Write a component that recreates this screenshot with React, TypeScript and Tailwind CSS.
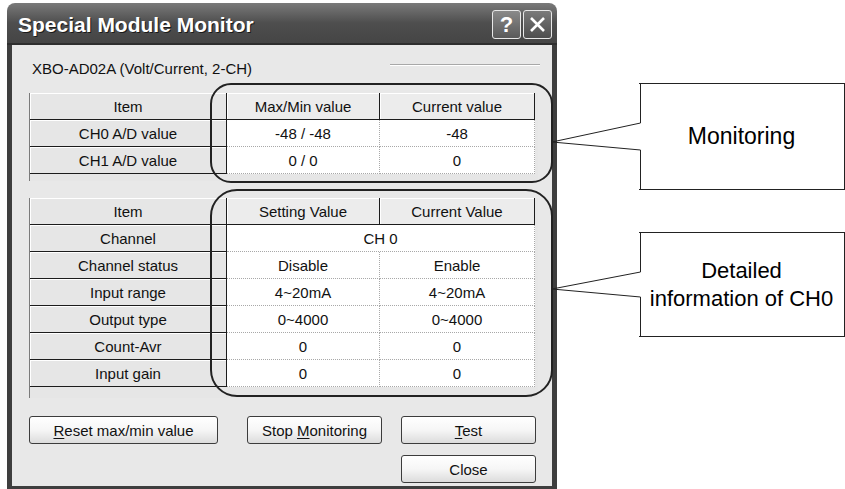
import React from 'react';

type Row = { label: string; a: string; b?: string; span?: boolean };

const monitorRows: Row[] = [
  { label: 'CH0 A/D value', a: '-48 / -48', b: '-48' },
  { label: 'CH1 A/D value', a: '0 / 0', b: '0' },
];

const detailRows: Row[] = [
  { label: 'Channel', a: 'CH 0', span: true },
  { label: 'Channel status', a: 'Disable', b: 'Enable' },
  { label: 'Input range', a: '4~20mA', b: '4~20mA' },
  { label: 'Output type', a: '0~4000', b: '0~4000' },
  { label: 'Count-Avr', a: '0', b: '0' },
  { label: 'Input gain', a: '0', b: '0' },
];

function ItemCell({ children }: { children: React.ReactNode }) {
  return (
    <div className="flex h-full w-[197px] items-center justify-center border-r border-b border-[#1c1c1c] bg-[#e6e6e6] shadow-[inset_1px_1px_0_#ffffff]">
      {children}
    </div>
  );
}

function HeadCell({ children, wide }: { children: React.ReactNode; wide?: boolean }) {
  return (
    <div
      className={`flex h-full items-center justify-center border-r border-b border-[#1c1c1c] bg-[#ececec] shadow-[inset_1px_1px_0_#ffffff] ${
        wide ? 'w-[155px]' : 'w-[153px]'
      }`}
    >
      {children}
    </div>
  );
}

function DataCell({ children, w }: { children: React.ReactNode; w: string }) {
  return (
    <div className={`flex h-full items-center justify-center border-r border-b border-dotted border-[#a8a8a8] bg-white ${w}`}>
      {children}
    </div>
  );
}

function Grid({ head, rows, strip }: { head: [string, string]; rows: Row[]; strip: string }) {
  return (
    <div className="flex w-[509px] flex-col border-l border-[#7a7a7a] bg-[#e6e6e6]">
      <div className="flex h-[27px]">
        <ItemCell>Item</ItemCell>
        <HeadCell>{head[0]}</HeadCell>
        <HeadCell wide>{head[1]}</HeadCell>
      </div>
      {rows.map((r) => (
        <div key={r.label} className="flex h-[27px]">
          <ItemCell>{r.label}</ItemCell>
          {r.span ? (
            <DataCell w="w-[308px]">{r.a}</DataCell>
          ) : (
            <>
              <DataCell w="w-[153px]">{r.a}</DataCell>
              <DataCell w="w-[155px]">{r.b}</DataCell>
            </>
          )}
        </div>
      ))}
      <div className={strip} />
    </div>
  );
}

function Btn({ children, w }: { children: React.ReactNode; w: string }) {
  return (
    <div
      className={`flex h-[28px] items-center justify-center rounded-[3px] border border-[#3c3c3c] bg-gradient-to-b from-white via-[#f6f6f6] to-[#dcdcdc] ${w}`}
    >
      {children}
    </div>
  );
}

export default function App() {
  return (
    <div className="relative flex h-[489px] w-[845px] overflow-hidden bg-white font-['Liberation_Sans',Arial,sans-serif] text-[15px] leading-none text-[#111]">
      {/* dialog */}
      <div className="mt-[3px] ml-[7px] flex h-[486px] w-[551px] flex-col">
        <div className="flex h-[42px] items-start justify-between rounded-t-[8px] border-b-2 border-[#2e2e2e] bg-gradient-to-b from-[#7a7a7a] via-[#4e4e4e] to-[#454545] pl-[11px] pr-[5px]">
          <span className="mt-[11px] text-[21px] font-bold text-white [text-shadow:1px_1px_0_#1a1a1a]">
            Special Module Monitor
          </span>
          <div className="mt-[7px] flex gap-[2px]">
            <div className="flex h-[29px] w-[29px] items-center justify-center rounded-[3px] border border-[#e8e8e8] bg-gradient-to-b from-[#8a8a8a] to-[#5a5a5a] text-[22px] font-bold text-white">
              ?
            </div>
            <div className="flex h-[29px] w-[29px] items-center justify-center rounded-[3px] border border-[#e8e8e8] bg-gradient-to-b from-[#7a7a7a] to-[#4e4e4e]">
              <svg width="17" height="17" viewBox="0 0 17 17">
                <path d="M2 2 L15 15 M15 2 L2 15" stroke="#fff" strokeWidth="2.6" />
              </svg>
            </div>
          </div>
        </div>
        <div className="flex flex-1 flex-col border-x-[5px] border-b-[3px] border-[#3e3e3e] bg-[#e8e8e8] pt-[14px] pl-[17px]">
          <div className="flex h-[18px] items-center">
            <span className="ml-[3px]">XBO-AD02A (Volt/Current, 2-CH)</span>
            <div className="mt-[-6px] ml-[138px] h-[2px] w-[150px] border-t border-b border-t-[#a8a8a8] border-b-white" />
          </div>
          <div className="mt-[16px]">
            <Grid head={['Max/Min value', 'Current value']} rows={monitorRows} strip="h-[7px]" />
          </div>
          <div className="mt-[17px]">
            <Grid head={['Setting Value', 'Current Value']} rows={detailRows} strip="h-[11px]" />
          </div>
          <div className="mt-[18px] flex">
            <Btn w="w-[189px]">
              <span>
                <span className="underline underline-offset-2">R</span>eset max/min value
              </span>
            </Btn>
            <div className="ml-[29px]">
              <Btn w="w-[135px]">
                <span>
                  Stop <span className="underline underline-offset-2">M</span>onitoring
                </span>
              </Btn>
            </div>
            <div className="ml-[19px]">
              <Btn w="w-[135px]">
                <span>
                  <span className="underline underline-offset-2">T</span>est
                </span>
              </Btn>
            </div>
          </div>
          <div className="mt-[11px] ml-[372px]">
            <Btn w="w-[135px]">Close</Btn>
          </div>
        </div>
      </div>

      {/* callouts */}
      <div className="ml-[82px] flex flex-col text-[22px] text-black">
        <div className="mt-[83px] flex h-[107px] w-[206px] items-center justify-center border-y border-r border-[#222] text-[23px]">
          Monitoring
        </div>
        <div className="mt-[42px] flex h-[105px] w-[206px] flex-col items-center justify-center border-y border-r border-[#222] text-center leading-[28px]">
          <span>Detailed</span>
          <span>information of CH0</span>
        </div>
      </div>

      {/* annotation outlines */}
      <svg className="pointer-events-none absolute inset-0" width="845" height="489" viewBox="0 0 845 489">
        <g fill="none" stroke="#222">
          <rect x="211" y="84" width="341" height="98" rx="20" strokeWidth="2" />
          <rect x="211" y="190" width="341" height="206" rx="26" strokeWidth="2" />
          <polyline points="640.5,83 640.5,123 552,142 640.5,150 640.5,190" strokeWidth="1" />
          <polyline points="640.5,232 640.5,272 552,289 640.5,297 640.5,337" strokeWidth="1" />
        </g>
      </svg>
    </div>
  );
}
